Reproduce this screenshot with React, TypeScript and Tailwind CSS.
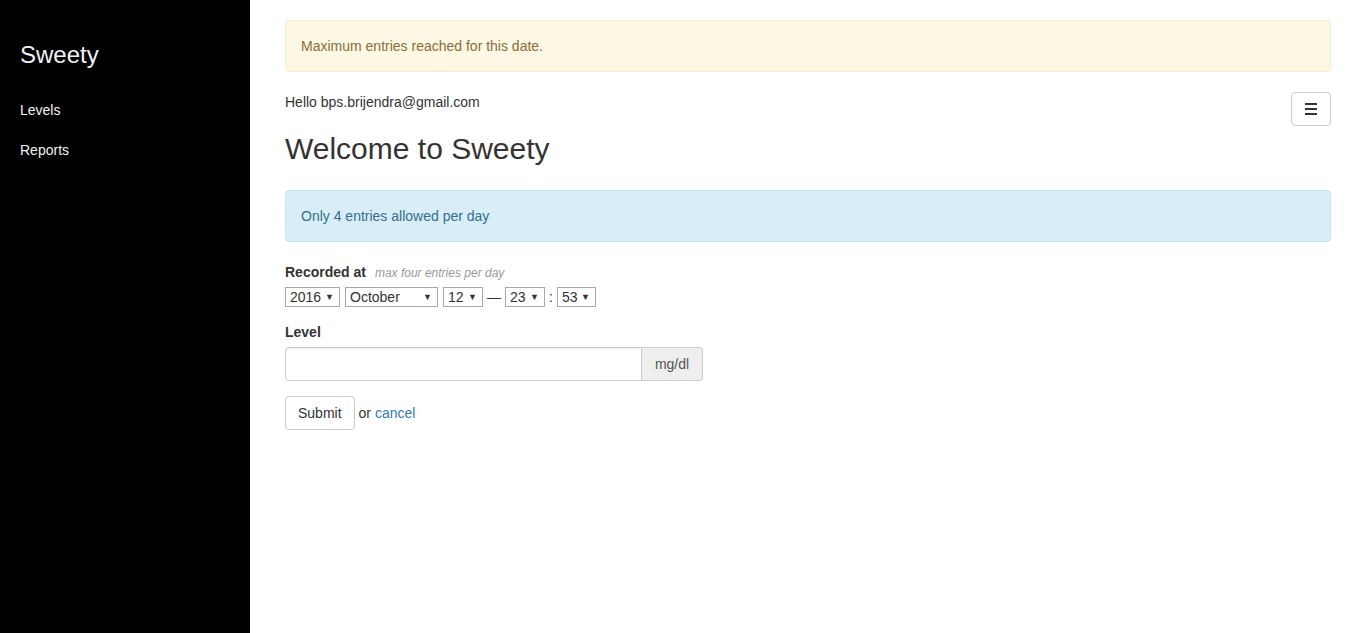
const FONT = "font-['Liberation_Sans',Arial,sans-serif]"

function FakeSelect({ value, width }: { value: string; width: string }) {
  return (
    <div
      className={`${width} h-[20px] flex items-center justify-between border border-[#a9a9a9] bg-white pl-[4px] pr-[5px] text-[14px] text-[#333]`}
    >
      <span>{value}</span>
      <span className="text-[9px] leading-none">▼</span>
    </div>
  )
}

export default function App() {
  return (
    <div className={`${FONT} flex min-h-[633px] bg-white text-[14px] leading-[20px] text-[#333]`}>
      {/* Sidebar */}
      <aside className="w-[250px] shrink-0 bg-black px-[20px] pt-[40px] text-[#f2f2f2]">
        <div className="text-[24px] leading-[30px]">Sweety</div>
        <nav className="mt-[30px] flex flex-col gap-[20px]">
          <a className="leading-[20px]">Levels</a>
          <a className="leading-[20px]">Reports</a>
        </nav>
      </aside>

      {/* Main */}
      <main className="flex-1 px-[35px] pt-[20px]">
        <div className="rounded-[4px] border border-[#faebcc] bg-[#fcf8e3] px-[15px] py-[15px] text-[#8a6d3b]">
          Maximum entries reached for this date.
        </div>

        <div className="mt-[20px] flex items-start justify-between">
          <div>
            <div>Hello bps.brijendra@gmail.com</div>
            <h2 className="mt-[20px] text-[30px] leading-[33px] text-[#333]">Welcome to Sweety</h2>
          </div>
          <button className="flex h-[34px] w-[40px] flex-col items-center justify-center gap-[3px] rounded-[4px] border border-[#ccc] bg-white">
            <span className="block h-[2px] w-[12px] bg-[#333]" />
            <span className="block h-[2px] w-[12px] bg-[#333]" />
            <span className="block h-[2px] w-[12px] bg-[#333]" />
          </button>
        </div>

        <div className="mt-[25px] rounded-[4px] border border-[#bce8f1] bg-[#d9edf7] px-[15px] py-[15px] text-[#31708f]">
          Only 4 entries allowed per day
        </div>

        <div className="mt-[20px]">
          <div className="flex items-baseline gap-[9px]">
            <span className="text-[14px] font-bold">Recorded at</span>
            <span className="text-[12px] italic text-[#999]">max four entries per day</span>
          </div>
          <div className="mt-[4px] flex h-[20px] items-center gap-[5px]">
            <FakeSelect value="2016" width="w-[55px]" />
            <FakeSelect value="October" width="w-[93px]" />
            <FakeSelect value="12" width="w-[40px]" />
            <span className="-mx-[1px]">—</span>
            <FakeSelect value="23" width="w-[40px]" />
            <span className="-mx-[1px]">:</span>
            <FakeSelect value="53" width="w-[39px]" />
          </div>
        </div>

        <div className="mt-[15px]">
          <div className="font-bold">Level</div>
          <div className="mt-[5px] flex h-[34px] w-[418px]">
            <input className="h-[34px] min-w-0 flex-1 rounded-l-[4px] border border-[#ccc] px-[12px] shadow-[inset_0_1px_1px_rgba(0,0,0,0.075)] outline-none" />
            <span className="flex h-[34px] w-[61px] items-center justify-center rounded-r-[4px] border border-l-0 border-[#ccc] bg-[#eee] text-[#555]">
              mg/dl
            </span>
          </div>
        </div>

        <div className="mt-[15px] flex items-center gap-[4px]">
          <button className="h-[34px] rounded-[4px] border border-[#ccc] bg-white px-[12px] text-[#333]">Submit</button>
          <span>
            or <a className="text-[#337ab7]">cancel</a>
          </span>
        </div>
      </main>
    </div>
  )
}
